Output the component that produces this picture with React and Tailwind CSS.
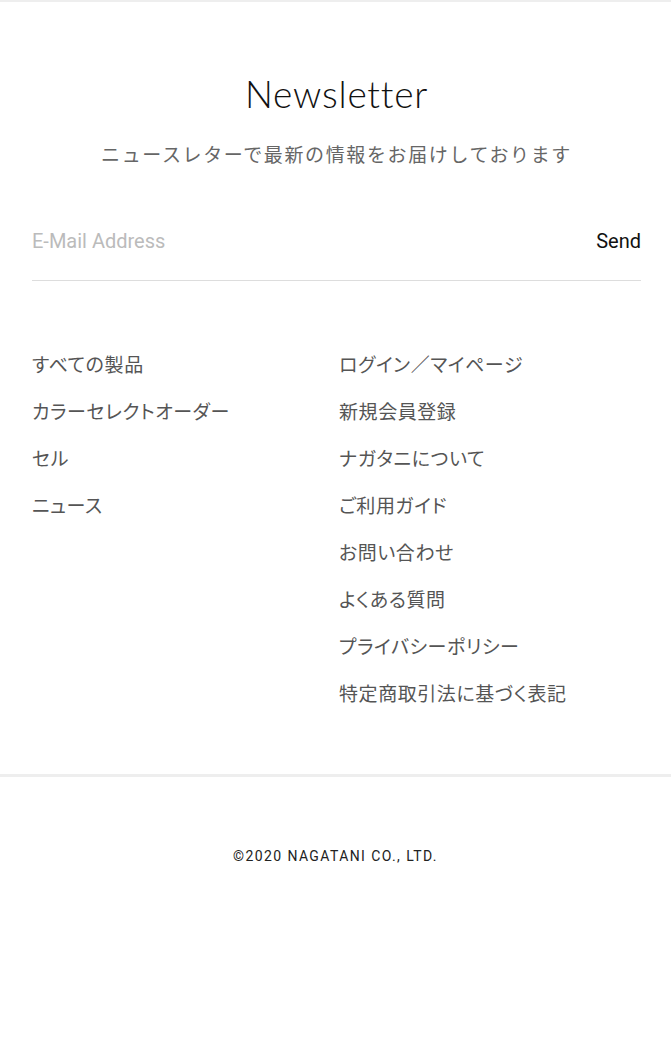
export default function App() {
  const left = ["すべての製品", "カラーセレクトオーダー", "セル", "ニュース"]
  const right = [
    "ログイン／マイページ",
    "新規会員登録",
    "ナガタニについて",
    "ご利用ガイド",
    "お問い合わせ",
    "よくある質問",
    "プライバシーポリシー",
    "特定商取引法に基づく表記",
  ]
  const jp = { fontFamily: '"Noto Sans CJK JP", "Noto Sans", sans-serif' }
  const palt = { ...jp, fontFeatureSettings: '"palt"' }

  return (
    <div className="w-full min-h-screen bg-white">
      <div className="border-t-2 border-[#eeeeee]">
        <section className="pl-8 pr-[30px] pt-[70px]">
          <h2 className="text-center text-[37px] leading-[44px] text-[#111] font-light tracking-[0.02em]" style={{ fontFamily: 'Lato, "Open Sans", sans-serif' }}>
            Newsletter
          </h2>
          <p className="mt-[23px] text-center text-[19px] leading-[30px] text-[#666] tracking-[0.085em]" style={jp}>
            ニュースレターで最新の情報をお届けしております
          </p>

          <div className="mt-[57px] flex items-center justify-between border-b border-[#dddddd] pb-[24px]" style={{ fontFamily: 'Roboto, "Liberation Sans", sans-serif' }}>
            <input
              type="email"
              placeholder="E-Mail Address"
              className="flex-1 outline-none text-[20px] leading-[30px] text-[#333] placeholder:text-[#bbbbbb]"
            />
            <button className="text-[20px] leading-[30px] text-[#111]">Send</button>
          </div>

          <div className="mt-[68px] grid grid-cols-2 gap-x-[5px]" style={palt}>
            <ul className="flex flex-col gap-[17px]">
              {left.map((t) => (
                <li key={t} className="text-[19px] leading-[30px] text-[#555] tracking-[0.03em]">{t}</li>
              ))}
            </ul>
            <ul className="flex flex-col gap-[17px]">
              {right.map((t) => (
                <li key={t} className="text-[19px] leading-[30px] text-[#555] tracking-[0.03em]">{t}</li>
              ))}
            </ul>
          </div>
        </section>

        <footer className="mt-[66px] border-t-[3px] border-[#eeeeee] pt-[69px] pb-[190px]">
          <p className="text-center text-[14px] leading-[20px] text-[#222] tracking-[0.1em]" style={{ fontFamily: 'Roboto, "Liberation Sans", sans-serif' }}>
            ©2020 NAGATANI CO., LTD.
          </p>
        </footer>
      </div>
    </div>
  )
}
